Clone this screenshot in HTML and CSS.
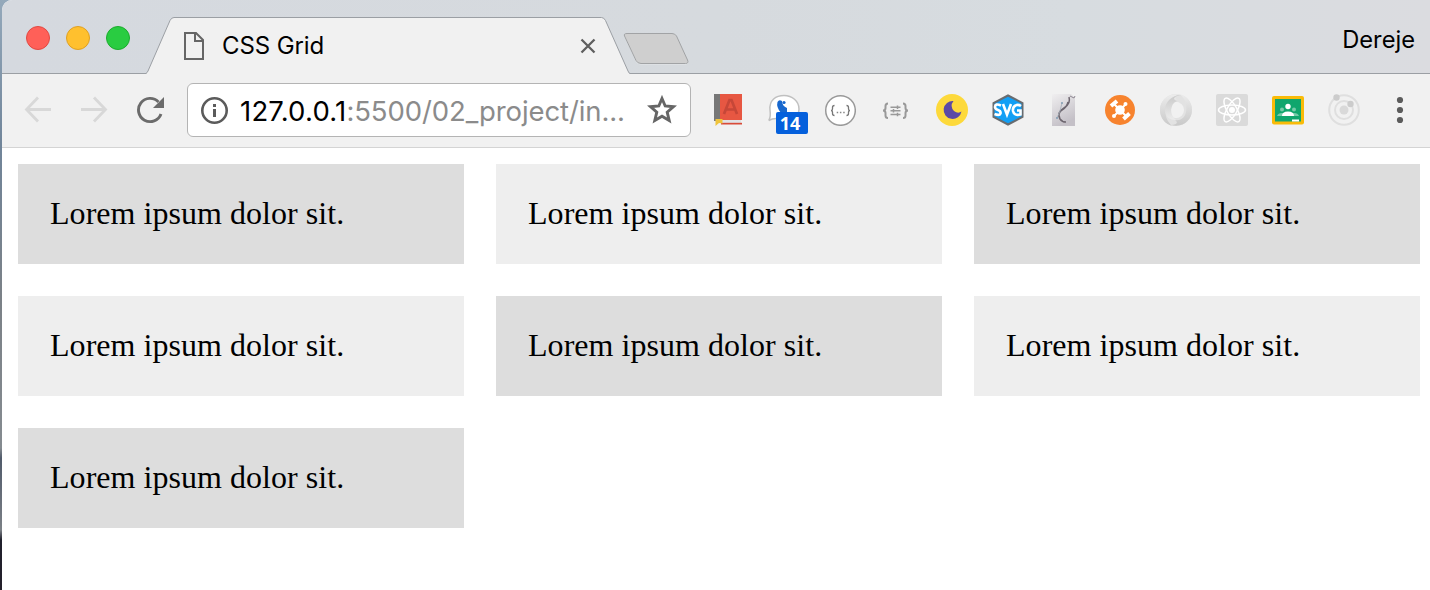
FILE: index.html
```html
<!DOCTYPE html>
<html lang="en">
<head>
<meta charset="utf-8">
<title>CSS Grid</title>
<link rel="stylesheet" href="styles.css">
</head>
<body>
<div class="window">
  <header class="titlebar">
    <div class="lights">
      <span class="light light-close"></span>
      <span class="light light-min"></span>
      <span class="light light-max"></span>
    </div>
    <div class="tab">
      <svg class="tab-shape" width="484" height="57" viewBox="0 0 484 57">
        <path d="M0 57V56.5Q1 56 2 54L24 3.500Q25.500.5 28 .5H455.500Q458 .5 459.500 3.500L482 54Q483 56.500 484 56.500V57Z" fill="#f1f1f1"/>
        <path d="M0 56.500Q1 56 2 54L24 3.500Q25.500.5 28 .5H455.500Q458 .5 459.500 3.500L482 54Q483 56.500 484 56.500" fill="none" stroke="#9b9fa4"/>
      </svg>
      <svg class="tab-file" width="20" height="28" viewBox="0 0 20 28" fill="none" stroke="#666" stroke-width="2">
        <path d="M1 1H12L19 8V27H1Z"/><path d="M11 1V9H19" />
      </svg>
      <span class="tab-title">CSS Grid</span>
      <svg class="tab-close" width="16" height="16" viewBox="0 0 16 16" stroke="#5f5f5f" stroke-width="2.300"><path d="M1.500 1.500L14.500 14.500M14.500 1.500L1.500 14.500"/></svg>
    </div>
    <svg class="new-tab" width="68" height="34" viewBox="0 0 68 34">
      <path d="M4 2.500H49Q52 2.500 53.500 5L64.500 29Q66 32.500 62.500 32.500H18Q14.500 32.500 13 29.500L1.500 5Q.5 2.500 4 2.500Z" fill="#e5e8ea"/>
      <path d="M4 1.500H49Q52 1.500 53.500 4L64.500 28Q66 31.500 62.500 31.500H18Q14.500 31.500 13 28.500L1.500 4Q.5 1.500 4 1.500Z" fill="#cfcfcf" stroke="#a1a3a5"/>
    </svg>
    <span class="user">Dereje</span>
  </header>

  <nav class="toolbar">
    <div class="nav-buttons">
      <svg width="28" height="28" viewBox="0 0 28 28" fill="none" stroke="#d8d8d8" stroke-width="2.800"><path d="M27 13.500H3M14 1.500L2.500 13.500L14 25.500"/></svg>
      <svg width="28" height="28" viewBox="0 0 28 28" fill="none" stroke="#d8d8d8" stroke-width="2.800"><path d="M1 13.500H25M14 1.500L25.500 13.500L14 25.500"/></svg>
      <svg width="28" height="28" viewBox="0 0 28 28"><path d="M25 18A11.600 11.600 0 1 1 22.500 6" fill="none" stroke="#6b6b6b" stroke-width="2.900"/><path d="M28 1V12H17Z" fill="#6b6b6b"/></svg>
    </div>
    <div class="omnibox">
      <svg class="info" width="28" height="28" viewBox="0 0 28 28"><circle cx="14.500" cy="14.500" r="12.200" fill="none" stroke="#5b5b5b" stroke-width="2.600"/><path d="M13 8H16V11H13ZM13 13H16V21H13Z" fill="#5b5b5b"/></svg>
      <span class="url"><span class="host">127.0.0.1</span><span class="path">:5500/02_project/in...</span></span>
      <svg class="star" width="30" height="30" viewBox="0 0 30 30"><path d="M15 3.500L18.200 11L26.500 11.700L20.200 17.200L22.200 25.500L15 21.200L7.800 25.500L9.800 17.200L3.500 11.700L11.800 11Z" fill="none" stroke="#666" stroke-width="2.900"/></svg>
    </div>
    <div class="extensions">
      <svg width="32" height="32" viewBox="0 0 32 32">
        <path d="M2 0H8V27H2Z" fill="#777"/><path d="M8 0H30V26H8Z" fill="#e75742"/><path d="M8 26H29V29H8Z" fill="#dfe2e5"/><path d="M9 28.800H30V30.500H9Z" fill="#d84b38"/>
        <path d="M12 20L17.500 6H19.500L25 20M14 15.500H23" fill="none" stroke="#c64738" stroke-width="2.700"/><path d="M3.500 25H10.500V29.500L7 29L3.500 32Z" fill="#efc43c"/>
      </svg>
      <span class="ext-badged">
        <svg width="32" height="32" viewBox="0 0 32 32"><path d="M.8 26.500Q3 23 2 16C1 6 8 1.500 16 1.500S31 7 31 15S24 26 15 26Q7 23 .8 26.500Z" fill="#fff" stroke="#c0c0c0" stroke-width="1.500"/><path d="M9.500 8Q11 5 14 7Q14 12 19 14V19H13Q8 13 9.500 8Z" fill="#1767ce"/><circle cx="16" cy="8.500" r="1.600" fill="#1767ce"/></svg>
        <span class="badge">14</span>
      </span>
      <svg width="32" height="32" viewBox="0 0 32 32"><circle cx="16.500" cy="16.500" r="14.800" fill="#fff" stroke="#999" stroke-width="1.500"/><path d="M10.500 11.500Q8.500 11.500 8.500 13.500V15Q8.500 16.500 7 16.500Q8.500 16.500 8.500 18V19.500Q8.500 21.500 10.500 21.500M22.500 11.500Q24.500 11.500 24.500 13.500V15Q24.500 16.500 26 16.500Q24.500 16.500 24.500 18V19.500Q24.500 21.500 22.500 21.500" fill="none" stroke="#777" stroke-width="1.300"/><path d="M12.700 18.500H14.200M15.900 18.500H17.400M19.200 18.500H20.700" stroke="#888" stroke-width="1.300"/></svg>
      <svg width="32" height="32" viewBox="0 0 32 32" fill="none" stroke="#999" stroke-width="2"><path d="M8 9.500Q5.500 9.500 5.500 12V14Q5.500 16.500 3 16.500Q5.500 16.500 5.500 19V21.500Q5.500 24 8 24M23 9.500Q25.500 9.500 25.500 12V14Q25.500 16.500 28 16.500Q25.500 16.500 25.500 19V21.500Q25.500 24 23 24"/><path d="M10.500 13.200H20.500M10.500 16.800H20.500M10.500 20.400H20.500M17.500 11.500V15M13.500 15V18.500M17.500 18.700V22.200" stroke-width="1.500"/></svg>
      <svg width="32" height="32" viewBox="0 0 32 32"><circle cx="16" cy="16" r="16" fill="#fdd93b"/><path d="M17.500 7A9 9 0 1 0 25.500 17.500Q22 20 18 17Q13.500 12 17.500 7Z" fill="#5b49a5"/></svg>
      <svg width="32" height="32" viewBox="0 0 32 32"><path d="M16 1.500L30.500 9V23L16 30.500L1.500 23V9Z" fill="#129ff5" stroke="#686c70" stroke-width="2"/><path d="M9 11.500Q3 9 3 13Q3 15 6 16Q9 17 8.500 19.500Q7.500 22 2.500 20M11 10L15 20.500L19 10M29 12Q26 10 23.500 11.500Q20.500 13 21 17Q22 22 28.500 20.500V16.500H25" fill="none" stroke="#fff" stroke-width="2.600"/></svg>
      <svg width="32" height="32" viewBox="0 0 32 32"><defs><linearGradient id="paper" x1="0" y1="0" x2=".4" y2="1"><stop stop-color="#f0eff0"/><stop offset="1" stop-color="#c4c0c7"/></linearGradient></defs><path d="M4 0H23L27 4V32H4Z" fill="url(#paper)"/><path d="M21 3Q23 10 16 14Q8 19 12 25Q14 28 18 28M20 8Q19 13 14 16Q9 20 12 24" fill="none" stroke="#6d666f" stroke-width="1.500"/><path d="M14 9L12 17L9 24" fill="none" stroke="#a3acb8" stroke-width=".8"/><circle cx="14" cy="9" r="1" fill="#829eb3"/><circle cx="9" cy="24" r="1" fill="#829eb3"/><path d="M22 2L26 4L27 2" fill="none" stroke="#8d8791"/></svg>
      <svg width="32" height="32" viewBox="0 0 32 32"><circle cx="16" cy="16" r="15" fill="#f7832e"/><g stroke="#fff" fill="none"><path d="M10 10L22 22M10.500 21.500L21.500 10.500" stroke-width="2"/><path d="M7 12L13 7M19.500 25L25.500 19.500" stroke-width="4"/></g><circle cx="16" cy="16" r="4.800" fill="#fff"/><circle cx="21.500" cy="10" r="2" fill="#fff"/><circle cx="10" cy="22" r="2" fill="#fff"/></svg>
      <svg width="32" height="32" viewBox="0 0 32 32"><defs><linearGradient id="ringA" x1="0" y1="0" x2="0" y2="1"><stop stop-color="#c9c9c9"/><stop offset="1" stop-color="#ececec"/></linearGradient><linearGradient id="ringB" x1="0" y1="0" x2="0" y2="1"><stop stop-color="#ececec"/><stop offset="1" stop-color="#c9c9c9"/></linearGradient></defs><circle cx="16" cy="16" r="12" fill="none" stroke="#e2e2e2" stroke-width="8"/><path d="M21 1C9-2 0 6 0 16C0 24 5 30 12 32C6 26 5 21 6 15C7 9 12 5 17 6C13 2 16 1 21 1Z" fill="url(#ringB)"/><path d="M11 31C23 34 32 26 32 16C32 8 27 2 20 0C26 6 27 12 26 18C25 24 20 27 15 26C19 29 16 31 11 31Z" fill="url(#ringB)"/><path d="M21 1C12 1 5 8 5 16C5 23 10 26 16 26C9 21 10 10 17 7C11 5 15 2 21 1Z" fill="url(#ringA)"/><ellipse cx="16.500" cy="16" rx="4.800" ry="8" fill="#f1f1f1"/></svg>
      <svg width="32" height="32" viewBox="0 0 32 32"><rect width="32" height="32" rx="2" fill="#dadada"/><circle cx="16" cy="16" r="3" fill="#fff"/><g fill="none" stroke="#fff" stroke-width="1.500"><ellipse cx="16" cy="16" rx="13.500" ry="5"/><ellipse cx="16" cy="16" rx="13.500" ry="5" transform="rotate(60 16 16)"/><ellipse cx="16" cy="16" rx="13.500" ry="5" transform="rotate(120 16 16)"/></g></svg>
      <svg width="32" height="32" viewBox="0 0 32 32"><rect y="2" width="32" height="28.500" rx="2" fill="#f9bb08"/><path d="M3 5H29V27.500H3Z" fill="#10a66d"/><g fill="#75cba8"><circle cx="10" cy="15.500" r="2"/><circle cx="22" cy="15.500" r="2"/><path d="M5 22Q6 19 10 19H22Q26 19 27 22Z"/></g><circle cx="16" cy="12.500" r="2.700" fill="#fff"/><path d="M10 22Q10 17.500 16 17.500T22 22ZM20 25.500H27V27.500H20Z" fill="#fff"/></svg>
      <svg width="32" height="32" viewBox="0 0 32 32"><g fill="none" stroke="#dfdfdf" stroke-width="2"><circle cx="16" cy="16" r="14.800"/><circle cx="16" cy="16" r="9"/></g><circle cx="16" cy="16" r="4.500" fill="#d9d9d9"/><circle cx="8.500" cy="3.500" r="3.200" fill="#ccc"/><circle cx="22.500" cy="10" r="3.200" fill="#ccc"/></svg>
      <svg width="32" height="32" viewBox="0 0 32 32" fill="#5c5c5c"><circle cx="16" cy="6" r="3.100"/><circle cx="16" cy="16" r="3.100"/><circle cx="16" cy="26" r="3.100"/></svg>
    </div>
  </nav>

  <main class="grid">
    <div class="cell">Lorem ipsum dolor sit.</div>
    <div class="cell">Lorem ipsum dolor sit.</div>
    <div class="cell">Lorem ipsum dolor sit.</div>
    <div class="cell">Lorem ipsum dolor sit.</div>
    <div class="cell">Lorem ipsum dolor sit.</div>
    <div class="cell">Lorem ipsum dolor sit.</div>
    <div class="cell">Lorem ipsum dolor sit.</div>
  </main>
</div>
</body>
</html>
```
FILE: styles.css
```css
* { box-sizing: border-box; }
body {
  margin: 0;
  height: 590px;
  padding-left: 2px;
  overflow: hidden;
  background: linear-gradient(#94a9bb 0, #71859a 145px, #7b8187 300px, #858b90 448px, #515b6b 458px, #7b8086 530px, #20202c 540px, #24202b 590px);
  font-family: Inter, "Liberation Sans", sans-serif;
  color: #000;
}
svg { display: block; flex: none; }
.window {
  height: 590px;
  background: #fff;
  border-top-left-radius: 10px;
  overflow: hidden;
}
.titlebar {
  display: flex;
  height: 74px;
  padding: 0 15px 0 24px;
  background: linear-gradient(90deg, #d5d9df, #d6dade 50%, #d7dce0 75%, #dbdce0);
  border-bottom: 1px solid #9b9fa4;
}
.lights { display: flex; gap: 16px; width: 120px; padding-top: 26px; }
.light { width: 24px; height: 24px; border-radius: 50%; border: 1px solid; }
.light-close { background: #ff6058; border-color: #e14942; }
.light-min { background: #ffc02e; border-color: #dfa023; }
.light-max { background: #29cc41; border-color: #1bac2d; }
.tab {
  position: relative;
  flex: none;
  display: flex;
  align-items: center;
  width: 484px;
  height: 57px;
  margin-top: 17px;
  padding: 0 34px 0 38px;
}
.tab-shape { position: absolute; left: 0; top: 0; }
.tab-file, .tab-title, .tab-close { position: relative; }
.tab-title { margin-left: 18px; font-size: 24px; letter-spacing: -0.1px; }
.tab-close { margin-left: auto; }
.new-tab { margin: 32px 0 0 -7px; }
.user { margin: 25px 0 0 auto; font-size: 23.7px; line-height: 30px; }
.toolbar {
  display: flex;
  align-items: center;
  height: 74px;
  padding: 0 14px 2px 22px;
  background: #f1f1f1;
  border-bottom: 1px solid #d4d4d4;
}
.nav-buttons { display: flex; gap: 28px; }
.omnibox {
  display: flex;
  align-items: center;
  width: 504px;
  height: 54px;
  margin-left: 23px;
  padding: 0 13px 0 12px;
  background: #fff;
  border: 1px solid #b4b4b4;
  border-radius: 6px;
}
.url { margin-left: 12px; padding-top: 2px; font-size: 27.5px; white-space: nowrap; }
.host { letter-spacing: 0.2px; }
.path { letter-spacing: -0.1px; color: #8b8b8b; }
.star { margin-left: auto; }
.extensions { display: flex; gap: 24px; margin-left: 21px; }
.ext-badged { position: relative; }
.badge {
  position: absolute;
  left: 8px;
  top: 18px;
  width: 32px;
  height: 22px;
  padding-right: 4px;
  border-radius: 2px;
  background: #0560dc;
  color: #fff;
  font: 700 18px/23px "Open Sans", sans-serif;
  text-align: center;
}
.grid {
  display: grid;
  grid-template-columns: repeat(3, 1fr);
  gap: 32px;
  padding: 16px 10px 16px 16px;
}
.cell {
  height: 100px;
  padding: 31px 32px;
  background: #eee;
  font: 32px/36px "Liberation Serif", serif;
  letter-spacing: 0.04px;
}
.cell:nth-child(odd) { background: #ddd; }
```
